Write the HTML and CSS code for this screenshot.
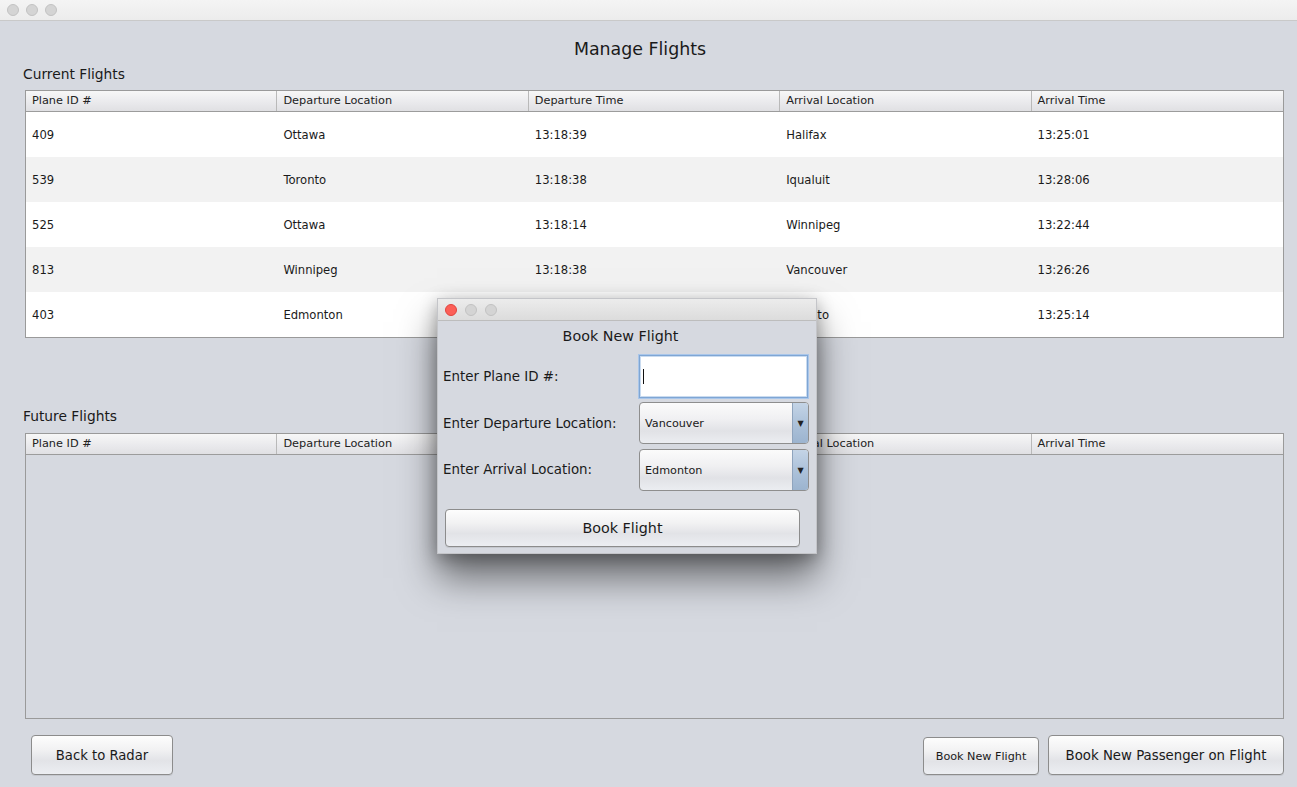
FILE: index.html
```html
<!DOCTYPE html>
<html>
<head>
<meta charset="utf-8">
<link rel="stylesheet" href="styles.css">
</head>
<body>
<div class="window">
  <div class="titlebar">
    <span class="light"></span><span class="light"></span><span class="light"></span>
  </div>
  <div class="content">
    <h1 class="page-title">Manage Flights</h1>
    <div class="section-label">Current Flights</div>
    <div class="table table-current">
      <div class="thead">
        <div class="th">Plane ID #</div>
        <div class="th">Departure Location</div>
        <div class="th">Departure Time</div>
        <div class="th">Arrival Location</div>
        <div class="th">Arrival Time</div>
      </div>
      <div class="tbody">
        <div class="tr"><div class="td">409</div><div class="td">Ottawa</div><div class="td">13:18:39</div><div class="td">Halifax</div><div class="td">13:25:01</div></div>
        <div class="tr alt"><div class="td">539</div><div class="td">Toronto</div><div class="td">13:18:38</div><div class="td">Iqualuit</div><div class="td">13:28:06</div></div>
        <div class="tr"><div class="td">525</div><div class="td">Ottawa</div><div class="td">13:18:14</div><div class="td">Winnipeg</div><div class="td">13:22:44</div></div>
        <div class="tr alt"><div class="td">813</div><div class="td">Winnipeg</div><div class="td">13:18:38</div><div class="td">Vancouver</div><div class="td">13:26:26</div></div>
        <div class="tr"><div class="td">403</div><div class="td">Edmonton</div><div class="td">13:18:38</div><div class="td">Toronto</div><div class="td">13:25:14</div></div>
      </div>
    </div>
    <div class="section-label future-label">Future Flights</div>
    <div class="table table-future">
      <div class="thead">
        <div class="th">Plane ID #</div>
        <div class="th">Departure Location</div>
        <div class="th">Departure Time</div>
        <div class="th">Arrival Location</div>
        <div class="th">Arrival Time</div>
      </div>
      <div class="tbody empty"></div>
    </div>
    <div class="button-row">
      <button class="btn btn-back">Back to Radar</button>
      <div class="button-group">
        <button class="btn btn-small">Book New Flight</button>
        <button class="btn btn-passenger">Book New Passenger on Flight</button>
      </div>
    </div>
  </div>

  <div class="dialog">
    <div class="dialog-titlebar">
      <span class="light red"></span><span class="light"></span><span class="light"></span>
    </div>
    <div class="dialog-body">
      <div class="dialog-title">Book New Flight</div>
      <div class="form">
        <label class="form-label">Enter Plane ID #:</label>
        <div class="textfield"><span class="caret"></span></div>
        <label class="form-label">Enter Departure Location:</label>
        <div class="combo"><span class="combo-value">Vancouver</span><span class="combo-arrow">&#9660;</span></div>
        <label class="form-label">Enter Arrival Location:</label>
        <div class="combo combo-second"><span class="combo-value">Edmonton</span><span class="combo-arrow">&#9660;</span></div>
      </div>
      <button class="btn btn-book">Book Flight</button>
    </div>
  </div>
</div>
</body>
</html>
```

FILE: styles.css
```css
* { box-sizing: border-box; }
html, body { margin: 0; padding: 0; }
body {
  font-family: "DejaVu Sans", "Liberation Sans", sans-serif;
  color: #1a1a1a;
  background: #d6d9e0;
}
.window {
  position: relative;
  width: 1297px;
  height: 787px;
  overflow: hidden;
  background: #d6d9e0;
}
.titlebar {
  height: 21px;
  background: linear-gradient(#f4f4f4, #ececec);
  border-bottom: 1px solid #c9c9c9;
  display: flex;
  align-items: center;
  padding-left: 7px;
  gap: 7px;
}
.light {
  width: 12px;
  height: 12px;
  border-radius: 50%;
  background: #d4d4d4;
  border: 1px solid #c2c2c2;
  display: block;
}
.light.red {
  background: #fc5f57;
  border-color: #e0443e;
}
.content {
  padding: 0 13px 0 25px;
  display: flex;
  flex-direction: column;
}
.page-title {
  margin: 17px 0 0 -29px;
  font-size: 17.4px;
  font-weight: normal;
  line-height: 22px;
  text-align: center;
}
.section-label {
  margin: 5px 0 7px -2px;
  font-size: 13.8px;
  line-height: 18px;
}
.future-label {
  margin-top: 69px;
  margin-bottom: 8px;
}
.table {
  border: 1px solid #9a9a9a;
  background: #fff;
}
.thead {
  display: grid;
  grid-template-columns: repeat(5, 1fr);
  height: 21px;
  background: linear-gradient(#f7f7f7, #e9e9ec 60%, #e0e0e3);
  border-bottom: 1px solid #9c9c9c;
}
.th {
  font-size: 11.3px;
  line-height: 20px;
  padding-left: 6px;
  border-right: 1px solid #b9b9b9;
  color: #222;
}
.th:last-child { border-right: none; }
.tr {
  display: grid;
  grid-template-columns: repeat(5, 1fr);
  height: 45px;
  align-items: center;
  background: #fff;
}
.tr.alt { background: #f2f2f2; }
.td {
  font-size: 11.6px;
  padding-left: 6px;
  padding-top: 1px;
  color: #1a1a1a;
}
.table-current { height: 248px; }
.table-future {
  height: 286px;
  background: #d6d9e0;
}
.button-row {
  margin-top: 16px;
  padding-left: 6px;
  display: flex;
  justify-content: space-between;
  align-items: center;
}
.button-group {
  display: flex;
  gap: 9px;
  align-items: center;
}
.btn {
  font-family: "DejaVu Sans", "Liberation Sans", sans-serif;
  color: #1a1a1a;
  border: 1px solid #8c8c8c;
  border-radius: 4px;
  background: linear-gradient(#fdfdfd, #f2f2f3 35%, #e2e3e7 65%, #eceef2);
  box-shadow: 0 1px 0 rgba(0,0,0,0.08);
  padding: 0;
  cursor: default;
}
.btn-back {
  width: 142px;
  height: 40px;
  font-size: 13.2px;
}
.btn-small {
  width: 116px;
  height: 38px;
  font-size: 11.2px;
  margin-top: 2px;
}
.btn-passenger {
  width: 236px;
  height: 40px;
  font-size: 13.3px;
}

/* dialog */
.dialog {
  position: absolute;
  left: 437px;
  top: 298px;
  width: 380px;
  height: 256px;
  background: #d6d9e0;
  border: 1px solid #c4c5c9;
  box-shadow: 0 24px 36px rgba(0,0,0,0.5), 0 4px 16px rgba(0,0,0,0.3);
}
.dialog-titlebar {
  height: 22px;
  background: linear-gradient(#ececec, #dcdcdc);
  border-bottom: 1px solid #bdbdbd;
  display: flex;
  align-items: center;
  padding-left: 7px;
  gap: 8px;
}
.dialog-body {
  padding: 4px 8px 0 5px;
  display: flex;
  flex-direction: column;
}
.dialog-title {
  text-align: center;
  font-size: 14.3px;
  line-height: 22px;
  margin-left: -10px;
}
.form {
  margin-top: 8px;
  display: grid;
  grid-template-columns: 196px 170px;
  grid-auto-rows: auto;
  row-gap: 4px;
  align-items: center;
}
.form-label {
  font-size: 13.4px;
}
.textfield {
  height: 43px;
  background: #fff;
  border: 1px solid #7fa6d4;
  box-shadow: 0 0 0 1px #a9c6ea, inset 0 0 0 1px #c9dbf0;
  display: flex;
  align-items: center;
  padding-left: 3px;
  margin-right: 1px;
}
.caret {
  width: 1px;
  height: 15px;
  background: #111;
}
.combo {
  height: 42px;
  border: 1px solid #8e8e8e;
  border-radius: 4px;
  background: linear-gradient(#fbfbfb, #f0f0f2 40%, #e1e2e6 70%, #ebedf1);
  display: flex;
  align-items: center;
  overflow: hidden;
}
.combo-second { margin-top: 1px; }
.combo-value {
  flex: 1;
  font-size: 11.2px;
  padding-left: 5px;
}
.combo-arrow {
  width: 16px;
  height: 100%;
  border-left: 1px solid #8fa4bd;
  background: linear-gradient(#c4d4e6, #adc2da 50%, #9cb4cf);
  font-size: 8px;
  display: flex;
  align-items: center;
  justify-content: center;
  color: #222;
}
.btn-book {
  margin-top: 18px;
  margin-left: 2px;
  width: 355px;
  height: 38px;
  font-size: 14.3px;
}
```
